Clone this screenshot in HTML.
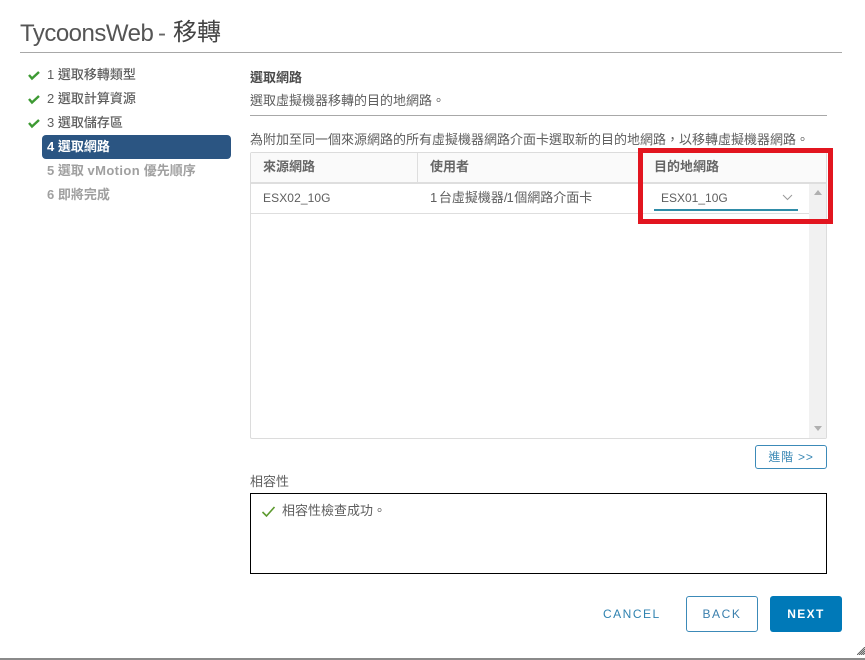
<!DOCTYPE html>
<html lang="zh-Hant"><head><meta charset="utf-8"><title>TycoonsWeb - 移轉</title>
<style>
html,body{margin:0;padding:0;background:#fff}
body{width:865px;height:660px;position:relative;overflow:hidden;font-family:"Liberation Sans","Noto Sans CJK TC",sans-serif;font-size:13px;color:#5e5e5e}
.a{position:absolute;white-space:nowrap}
.b{position:absolute;box-sizing:border-box}
.s{left:47px;height:24px;line-height:24px;font-size:13px;font-weight:500;color:#5e5e5e}
.ck{position:absolute;left:28px;width:13px;height:11px}
.t{line-height:18px;height:18px}
</style></head><body>
<div class="a" style="left:20px;top:18px;font-size:24px;line-height:32px;color:#555;letter-spacing:-.5px">TycoonsWeb</div>
<div class="a" style="left:158px;top:18px;font-size:24px;line-height:32px;color:#666">-</div>
<div class="a" style="left:173px;top:17px;font-size:24px;line-height:32px;color:#444">移轉</div>
<div class="b" style="left:20px;top:52px;width:822px;height:1px;background:#a8a8a8"></div>

<svg class="ck" style="top:70px" viewBox="0 0 13 11"><path d="M1 5l3 3.5L11 2" fill="none" stroke="#3d9a33" stroke-width="2.4"/></svg>
<svg class="ck" style="top:94px" viewBox="0 0 13 11"><path d="M1 5l3 3.5L11 2" fill="none" stroke="#3d9a33" stroke-width="2.4"/></svg>
<svg class="ck" style="top:118px" viewBox="0 0 13 11"><path d="M1 5l3 3.5L11 2" fill="none" stroke="#3d9a33" stroke-width="2.4"/></svg>
<div class="a s" style="top:63px">1 選取移轉類型</div>
<div class="a s" style="top:87px">2 選取計算資源</div>
<div class="a s" style="top:111px">3 選取儲存區</div>
<div class="b" style="left:42px;top:135px;width:189px;height:24px;background:#2b5582;border-radius:4px"></div>
<div class="a s" style="top:135px;color:#fff;font-weight:700">4 選取網路</div>
<div class="a s" style="top:159px;color:#a0a0a0;font-weight:700">5 選取 <span style="letter-spacing:.4px">vMotion</span> 優先順序</div>
<div class="a s" style="top:183px;color:#a0a0a0;font-weight:700">6 即將完成</div>

<div class="a t" style="left:250px;top:69px;font-size:13px;font-weight:700;color:#4a4a4a">選取網路</div>
<div class="a t" style="left:250px;top:92px;font-size:13px">選取虛擬機器移轉的目的地網路。</div>
<div class="b" style="left:250px;top:115px;width:577px;height:1px;background:#a8a8a8"></div>
<div class="a t" style="left:250px;top:131px;font-size:13px">為附加至同一個來源網路的所有虛擬機器網路介面卡選取新的目的地網路，以移轉虛擬機器網路。</div>

<div class="b" style="left:250px;top:152px;width:577px;height:287px;border:1px solid #dcdcdc;border-radius:2px"></div>
<div class="b" style="left:251px;top:153px;width:575px;height:29px;background:#fafafa"></div>
<div class="b" style="left:251px;top:182px;width:575px;height:2px;background:#dedede"></div>
<div class="b" style="left:417px;top:153px;width:1px;height:29px;background:#dedede"></div>
<div class="b" style="left:251px;top:213px;width:558px;height:1px;background:#dedede"></div>
<div class="b" style="left:809px;top:184px;width:17px;height:254px;background:#f1f1f1"></div>
<div class="b" style="left:814px;top:190px;border:4px solid transparent;border-top:0;border-bottom:5px solid #b0b0b0"></div>
<div class="b" style="left:814px;top:426px;border:4px solid transparent;border-bottom:0;border-top:5px solid #b0b0b0"></div>
<div class="a t" style="left:263px;top:158px;font-size:13px;font-weight:700;color:#666">來源網路</div>
<div class="a t" style="left:430px;top:158px;font-size:13px;font-weight:700;color:#666">使用者</div>
<div class="a t" style="left:654px;top:158px;font-size:13px;font-weight:700;color:#666">目的地網路</div>
<div class="a t" style="left:263px;top:189px;font-size:12px;letter-spacing:.1px">ESX02_10G</div>
<div class="a t" style="left:430px;top:189px;font-size:13px;word-spacing:-2px">1 台虛擬機器<span style="letter-spacing:-1px">/1</span> 個網路介面卡</div>
<div class="a t" style="left:661px;top:189px;font-size:12px">ESX01_10G</div>
<svg class="a" style="left:782px;top:194px" width="11" height="7" viewBox="0 0 11 7"><path d="M1 1l4.5 4.5L10 1" fill="none" stroke="#9a9a9a" stroke-width="1"/></svg>
<div class="b" style="left:654px;top:209px;width:144px;height:2px;background:#2f8ca8"></div>
<div class="b" style="left:638px;top:148px;width:195px;height:76px;border:5px solid #e2151f"></div>

<div class="b" style="left:755px;top:445px;width:72px;height:24px;border:1px solid #3c8ab8;border-radius:3px;color:#3a88b5;font-size:12px;line-height:22px;text-align:center;letter-spacing:.8px">進階 &gt;&gt;</div>
<div class="a t" style="left:250px;top:473px;font-size:13px">相容性</div>
<div class="b" style="left:250px;top:493px;width:577px;height:81px;border:1px solid #000"></div>
<svg class="a" style="left:261px;top:505px" width="15" height="13" viewBox="0 0 15 13"><path d="M1.5 7l4 4L13.5 2" fill="none" stroke="#5c9a2e" stroke-width="1.6"/></svg>
<div class="a t" style="left:282px;top:502px;font-size:13px">相容性檢查成功。</div>

<div class="a" style="left:603px;top:606px;font-size:12px;line-height:16px;letter-spacing:1.5px;color:#2f82b0">CANCEL</div>
<div class="b" style="left:686px;top:596px;width:72px;height:36px;border:1px solid #3c8ab8;border-radius:3px;color:#3a7fad;font-size:12px;line-height:34px;text-align:center;letter-spacing:1.6px">BACK</div>
<div class="b" style="left:770px;top:596px;width:72px;height:36px;background:#0079b8;border-radius:3px;color:#fff;font-size:12px;font-weight:700;line-height:36px;text-align:center;letter-spacing:1.4px">NEXT</div>

<svg class="a" style="left:857px;top:647px" width="8" height="8" viewBox="0 0 8 8"><path d="M0 8L8 0M2 8L8 2M4 8L8 4M6 8L8 6" stroke="#555" stroke-width=".9" fill="none"/></svg>
<div class="b" style="left:0;top:658px;width:865px;height:2px;background:#8a8a8a"></div>
</body></html>
